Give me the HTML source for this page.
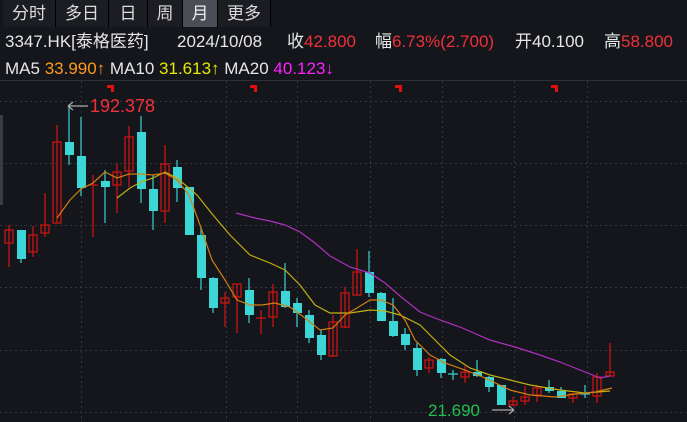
<!DOCTYPE html>
<html><head><meta charset="utf-8"><style>
html,body{margin:0;padding:0;background:#14161b;width:687px;height:422px;overflow:hidden}
body{position:relative;font-family:"Liberation Sans","Noto Sans CJK SC",sans-serif;color:#e6e6e6}
.tabs{position:absolute;left:0;top:0;width:687px;height:27px;background:#14161b}
.tab{position:absolute;top:0;height:27px;line-height:27px;font-size:17px;text-align:center;color:#dcdcdc;background:#1b1d22;border-right:1px solid #000}
.t{position:absolute;white-space:nowrap;font-size:17px;line-height:20px}
.r{color:#f0303a}
</style></head><body>
<div class="tabs">
<div class="tab" style="left:3px;width:52px">分时</div>
<div class="tab" style="left:56px;width:52px">多日</div>
<div class="tab" style="left:109px;width:38px">日</div>
<div class="tab" style="left:148px;width:34px">周</div>
<div class="tab" style="left:183px;width:34px;background:#4b4e56;color:#eee">月</div>
<div class="tab" style="left:218px;width:52px">更多</div>
</div>
<div class="t" style="left:5px;top:32px">3347.HK[泰格医药]</div>
<div class="t" style="left:177px;top:32px">2024/10/08</div>
<div class="t" style="left:287px;top:32px">收<span class="r">42.800</span></div>
<div class="t" style="left:375px;top:32px">幅<span class="r">6.73%(2.700)</span></div>
<div class="t" style="left:515px;top:32px">开40.100</div>
<div class="t" style="left:604px;top:32px">高<span class="r">58.800</span></div>
<div class="t" style="left:5px;top:59px">MA5 <span style="color:#ff9a1a">33.990↑</span> MA10 <span style="color:#e8e800">31.613↑</span> MA20 <span style="color:#ff20ff">40.123↓</span></div>
<svg width="687" height="422" style="position:absolute;left:0;top:0" xmlns="http://www.w3.org/2000/svg">
<line x1="0" y1="80.5" x2="687" y2="80.5" stroke="#2e3036"/>
<g stroke="#33363d" stroke-dasharray="2,3">
<line x1="0" y1="101.5" x2="687" y2="101.5"/><line x1="0" y1="163.5" x2="687" y2="163.5"/><line x1="0" y1="225.5" x2="687" y2="225.5"/><line x1="0" y1="287.5" x2="687" y2="287.5"/><line x1="0" y1="350.5" x2="687" y2="350.5"/><line x1="0" y1="412.5" x2="687" y2="412.5"/>
<line x1="81.5" y1="81" x2="81.5" y2="422"/><line x1="226.5" y1="81" x2="226.5" y2="422"/><line x1="297.5" y1="81" x2="297.5" y2="422"/><line x1="370.5" y1="81" x2="370.5" y2="422"/><line x1="442.5" y1="81" x2="442.5" y2="422"/><line x1="514.5" y1="81" x2="514.5" y2="422"/><line x1="587.5" y1="81" x2="587.5" y2="422"/>
</g>
<rect x="0" y="115" width="3" height="90" fill="#3a3c42"/>
<g fill="#e01010">
<path d="M107 85h7v7h-3v-4h-4z"/><path d="M250 85h7v7h-3v-4h-4z"/><path d="M395 85h7v7h-3v-4h-4z"/><path d="M551 85h7v7h-3v-4h-4z"/>
</g>
<g stroke="#c81414" fill="none" stroke-width="1.3">
<path d="M9 225V267M33 226V257M45 193V237M57 125V223M93 175V237M117 163V213M129 126V187M165 145V223M225 292V327M237 284V333M261 310V334M273 284V327M333 315V357M345 287V328M357 249V295M429 357V373M465 366V383M513 397V406M525 386V405M537 385V402M573 393V403M597 373V403M610 343V376"/>
<rect x="5" y="230" width="8" height="13"/><rect x="29" y="235" width="8" height="17"/><rect x="41" y="225" width="8" height="8"/><rect x="53" y="142" width="8" height="81"/><path d="M88 185h10M256 318h10"/><rect x="113" y="172" width="8" height="13"/><rect x="125" y="137" width="8" height="34"/><rect x="161" y="164" width="8" height="47"/><rect x="221" y="298" width="8" height="5"/><rect x="233" y="284" width="8" height="13"/><rect x="269" y="292" width="8" height="25"/><rect x="329" y="322" width="8" height="34"/><rect x="341" y="293" width="8" height="34"/><rect x="353" y="272" width="8" height="23"/><rect x="425" y="360" width="8" height="8"/><rect x="461" y="372" width="8" height="5"/><rect x="509" y="401" width="8" height="4"/><rect x="521" y="397" width="8" height="4"/><rect x="533" y="388" width="8" height="7"/><rect x="569" y="394" width="8" height="4"/><rect x="593" y="377" width="8" height="19"/><rect x="606" y="372" width="8" height="4"/>
</g>
<g stroke="#3ad0d0" stroke-width="1.2">
<path d="M21 230V263M69 105V165M81 117V196M105 170V223M141 116V203M153 175V230M177 160V202M189 187V235M201 227V290M213 277V313M249 278V323M285 263V308M297 298V327M309 310V343M321 330V360M369 251V297M381 292V321M393 298V337M405 328V350M417 343V376M441 358V378M453 370V380M477 360V377M489 376V392M501 385V405M549 380V393M561 387V398M585 385V398M448 374h10M580 394h10"/>
</g>
<g fill="#3dd6d6">
<rect x="17" y="230" width="9" height="29"/><rect x="65" y="142" width="9" height="13"/><rect x="77" y="156" width="9" height="32"/><rect x="101" y="181" width="9" height="6"/><rect x="137" y="132" width="9" height="57"/><rect x="149" y="189" width="9" height="22"/><rect x="173" y="167" width="9" height="21"/><rect x="185" y="187" width="9" height="48"/><rect x="197" y="235" width="9" height="43"/><rect x="209" y="278" width="9" height="30"/><rect x="245" y="290" width="9" height="25"/><rect x="281" y="291" width="9" height="16"/><rect x="293" y="303" width="9" height="10"/><rect x="305" y="315" width="9" height="23"/><rect x="317" y="335" width="9" height="20"/><rect x="365" y="272" width="9" height="21"/><rect x="377" y="293" width="9" height="28"/><rect x="389" y="321" width="9" height="15"/><rect x="401" y="334" width="9" height="11"/><rect x="413" y="348" width="9" height="22"/><rect x="437" y="359" width="9" height="14"/><rect x="473" y="372" width="9" height="4"/><rect x="485" y="377" width="9" height="10"/><rect x="497" y="385" width="9" height="20"/><rect x="545" y="387" width="9" height="4"/><rect x="557" y="391" width="9" height="7"/>
</g>
<g fill="none" stroke-width="1.2">
<polyline stroke="#b030c0" points="236,213 255,218 270,221 285,225 300,232 315,243 330,256 350,267 370,273 385,283 400,296 420,312 440,320 460,327 490,340 515,347 540,355 560,362 580,370 600,378 610,376"/>
<polyline stroke="#c0b010" points="117,198 130,188 141,182 153,178 165,172 177,178 197,195 213,215 230,235 250,255 270,263 285,270 300,285 315,305 330,313 350,313 370,310 385,311 400,315 420,325 435,340 450,355 470,368 490,375 510,380 530,385 560,390 585,393 610,391"/>
<polyline stroke="#d07f10" points="57,218 70,200 81,189 93,183 105,172 117,178 129,174 141,174 153,175 165,173 177,180 189,195 200,225 212,260 225,280 237,300 250,305 262,305 275,303 290,307 305,318 320,330 333,328 345,315 357,308 370,300 381,300 393,305 405,320 415,340 430,355 445,363 465,370 485,378 510,390 530,395 555,397 575,394 595,392 612,388"/>
</g>
<g stroke="#aaaaaa" fill="none" stroke-width="1.2">
<path d="M68 106H88M68 106l5-4M68 106l5 4"/>
<path d="M492 410H514M514 410l-5-4M514 410l-5 4"/>
</g>
<text x="90" y="112" fill="#f0303a" font-size="18" font-family="Liberation Sans, sans-serif">192.378</text>
<text x="428" y="416" fill="#20c050" font-size="17" font-family="Liberation Sans, sans-serif">21.690</text>
</svg>
</body></html>
